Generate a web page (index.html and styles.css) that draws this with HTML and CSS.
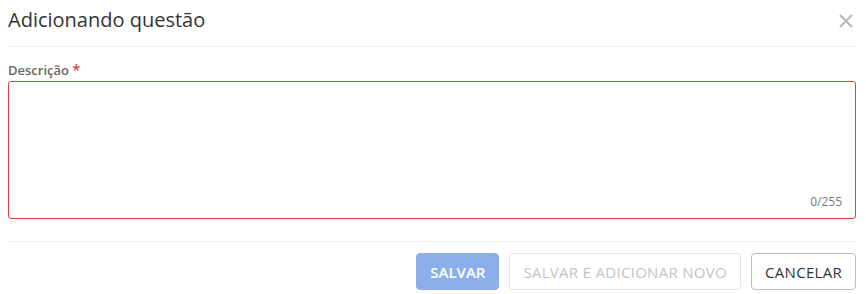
FILE: index.html
```html
<!DOCTYPE html>
<html lang="pt">
<head>
<meta charset="utf-8">
<title>Adicionando questão</title>
<link rel="stylesheet" href="styles.css">
</head>
<body>
<div class="modal">
  <div class="modal-header">
    <h1 class="modal-title">Adicionando questão</h1>
    <button class="close" aria-label="Fechar">
      <svg width="16" height="16" viewBox="0 0 16 16"><path d="M2 2 L14 14 M14 2 L2 14" stroke="#b8b8b8" stroke-width="2.2" fill="none"/></svg>
    </button>
  </div>
  <div class="modal-body">
    <label class="field-label">Descrição <span class="req">*</span></label>
    <div class="textarea-wrap">
      <textarea class="textarea"></textarea>
      <span class="counter">0/255</span>
    </div>
  </div>
  <div class="modal-footer">
    <button class="btn btn-primary">SALVAR</button>
    <button class="btn btn-disabled">SALVAR E ADICIONAR NOVO</button>
    <button class="btn btn-default">CANCELAR</button>
  </div>
</div>
</body>
</html>
```

FILE: styles.css
```css
* { box-sizing: border-box; }
html, body { margin: 0; background: #fff; }
body { font-family: "Open Sans", "Noto Sans", sans-serif; color: #333; }
.modal { padding: 0 10px 0 8px; }
.modal-header {
  display: flex;
  align-items: center;
  justify-content: space-between;
  height: 47px;
  padding-bottom: 6px;
  border-bottom: 1px solid #eeeeee;
}
.modal-title {
  margin: 0;
  font-size: 20px;
  font-weight: 400;
  line-height: 40px;
  color: #333;
}
.close {
  border: 0;
  background: none;
  padding: 0;
  margin-right: 2px;
  margin-top: 2px;
  width: 16px;
  height: 16px;
  display: flex;
}
.modal-body { padding-top: 13px; padding-bottom: 22px; }
.field-label {
  display: block;
  font-size: 13px;
  line-height: 18px;
  font-weight: 600;
  color: #666;
}
.req { color: #e0413b; font-size: 15px; }
.textarea-wrap { position: relative; margin-top: 2px; }
.textarea {
  display: block;
  width: 100%;
  height: 138px;
  border: 1px solid #d9413b;
  border-radius: 3px;
  resize: none;
  outline: none;
  font-family: inherit;
}
.counter {
  position: absolute;
  right: 14px;
  bottom: 9px;
  font-size: 12px;
  line-height: 16px;
  color: #777;
}
.modal-footer {
  border-top: 1px solid #eeeeee;
  padding-top: 11px;
  display: flex;
  justify-content: flex-end;
  gap: 10px;
}
.btn {
  height: 37px;
  padding: 0 13px;
  font-family: inherit;
  font-size: 15px;
  letter-spacing: 0.3px;
  border-radius: 4px;
  background: #fff;
  border: 1px solid #ccc;
  color: #333;
}
.btn-primary { background: #8cafec; border-color: #8cafec; color: #fff; font-weight: 600; letter-spacing: 0; }
.btn-disabled { border-color: #e3e3e3; color: #c3c3c3; }
.btn-default { border-color: #bdbdbd; color: #333; }
```
